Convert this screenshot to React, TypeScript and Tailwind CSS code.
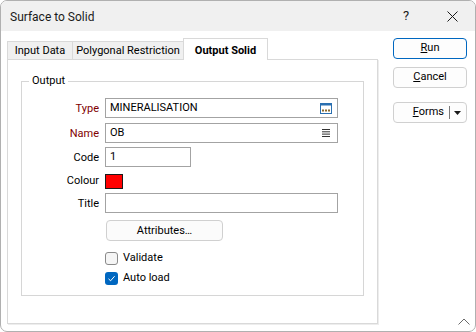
import React from "react";

function Checkbox({ checked }: { checked?: boolean }) {
  if (checked) {
    return (
      <div className="w-[13px] h-[13px] rounded-[3px] bg-[#0067c0] flex items-center justify-center">
        <svg width="9" height="9" viewBox="0 0 9 9">
          <polyline points="1.5,4.8 3.6,6.8 7.6,2.2" fill="none" stroke="#ffffff" strokeWidth="1" />
        </svg>
      </div>
    );
  }
  return <div className="w-[13px] h-[13px] rounded-[3px] border border-[#8a8a8a] bg-[#f5f5f5]" />;
}

export default function App() {
  return (
    <div className="w-[476px] h-[332px] relative flex flex-col bg-white border border-[#b0b0b0] rounded-[7px] overflow-hidden text-[11px] text-black font-['Roboto','Noto_Sans',sans-serif]">
      {/* Title bar */}
      <div className="h-[30px] shrink-0 bg-[#f0f0f0] flex items-center pl-[9px]">
        <span className="text-[12px] text-[#1a1a1a] pt-px">Surface to Solid</span>
        <div className="ml-auto flex h-full">
          <div className="w-[46px] flex items-center justify-center text-[13px] text-[#1a1a1a]">?</div>
          <div className="w-[46px] flex items-center justify-center">
            <svg width="11" height="11" viewBox="0 0 11 11">
              <line x1="0.5" y1="0.5" x2="10.5" y2="10.5" stroke="#1a1a1a" strokeWidth="1" />
              <line x1="10.5" y1="0.5" x2="0.5" y2="10.5" stroke="#1a1a1a" strokeWidth="1" />
            </svg>
          </div>
        </div>
      </div>

      {/* Body */}
      <div className="flex flex-1">
        {/* Left: tabs + panel */}
        <div className="pl-[6px] pt-[7px] flex flex-col">
          <div className="flex items-end h-[21px] relative z-10">
            <div className="w-[66px] h-[18px] border border-b-0 border-[#d9d9d9] bg-[#f0f0f0] flex items-center justify-center pt-[2px]">
              Input Data
            </div>
            <div className="-ml-px w-[112px] h-[18px] border border-b-0 border-[#d9d9d9] bg-[#f0f0f0] flex items-center justify-center pt-[2px]">
              Polygonal Restriction
            </div>
            <div className="-ml-px w-[85px] h-[22px] -mb-px border border-b-0 border-[#d9d9d9] bg-white flex items-start justify-center pt-[4px] font-bold relative z-10">
              Output Solid
            </div>
          </div>
          <div className="w-[371px] h-[265px] border border-[#d9d9d9] bg-white pt-[21px] px-[13px] shadow-[1px_1px_0_0_#ededed]">
            {/* Group box */}
            <div className="relative h-[215px] border border-[#d6d6d6] pt-[16px]">
              <span className="absolute -top-[8px] left-[7px] bg-white px-[3px] leading-[14px]">Output</span>

              {/* Type */}
              <div className="flex items-center h-[20px]">
                <div className="w-[77px] text-right text-[#800000] pt-[2px]">Type</div>
                <div className="ml-[6px] w-[233px] h-[20px] border border-[#a3a3a3] bg-white flex items-center pl-[4px] pr-[5px]">
                  <span className="pt-px">MINERALISATION</span>
                  <svg className="ml-auto" width="12" height="11" viewBox="0 0 12 11">
                    <rect x="0.5" y="0.5" width="11" height="10" fill="#ffffff" stroke="#2a6fb0" />
                    <rect x="0" y="0" width="12" height="2.5" fill="#2a6fb0" />
                    <rect x="2" y="6.5" width="2" height="2" fill="#8a6a2e" />
                    <rect x="5" y="6.5" width="2" height="2" fill="#8a6a2e" />
                    <rect x="8" y="6.5" width="2" height="2" fill="#8a6a2e" />
                  </svg>
                </div>
              </div>

              {/* Name */}
              <div className="flex items-center h-[20px] mt-[5px]">
                <div className="w-[77px] text-right text-[#800000] pt-[2px]">Name</div>
                <div className="ml-[6px] w-[233px] h-[20px] border border-[#a3a3a3] bg-white flex items-center pl-[4px] pr-[7px]">
                  <span className="pt-px">OB</span>
                  <svg className="ml-auto" width="8" height="8" viewBox="0 0 8 8">
                    <rect x="0" y="0" width="8" height="1" fill="#333333" />
                    <rect x="0" y="2.3" width="8" height="1" fill="#333333" />
                    <rect x="0" y="4.6" width="8" height="1" fill="#333333" />
                    <rect x="0" y="7" width="8" height="1" fill="#333333" />
                  </svg>
                </div>
              </div>

              {/* Code */}
              <div className="flex items-center h-[20px] mt-[4px]">
                <div className="w-[77px] text-right pt-[2px]">Code</div>
                <div className="ml-[6px] w-[86px] h-[20px] border border-[#a3a3a3] bg-white flex items-center pl-[4px]">
                  <span className="pt-px">1</span>
                </div>
              </div>

              {/* Colour */}
              <div className="flex items-center h-[21px] mt-[4px]">
                <div className="w-[77px] text-right">Colour</div>
                <div className="ml-[6px] w-[18px] h-[15px] border border-[#1a1a1a] bg-[#ff0000]" />
              </div>

              {/* Title */}
              <div className="flex items-center h-[20px] mt-[1px]">
                <div className="w-[77px] text-right pt-[2px]">Title</div>
                <div className="ml-[6px] w-[233px] h-[20px] border border-[#a3a3a3] bg-white" />
              </div>

              {/* Attributes */}
              <div className="flex mt-[7px]">
                <div className="ml-[84px] w-[117px] h-[21px] rounded-[4px] border border-[#d0d0d0] bg-[#fbfbfb] flex items-center justify-center pt-px">
                  Attributes…
                </div>
              </div>

              {/* Validate */}
              <div className="flex items-center h-[20px] mt-[7px] pl-[83px]">
                <Checkbox />
                <span className="ml-[5px] pt-px">Validate</span>
              </div>
              {/* Auto load */}
              <div className="flex items-center h-[20px] pl-[83px]">
                <Checkbox checked />
                <span className="ml-[5px] pt-px">Auto load</span>
              </div>
            </div>
          </div>
        </div>

        {/* Right: buttons */}
        <div className="ml-[15px] pt-[7px] flex flex-col">
          <div className="w-[74px] h-[21px] rounded-[4px] border border-[#0067c0] bg-[#fdfdfd] flex items-center justify-center">
            <span>
              <span className="underline">R</span>un
            </span>
          </div>
          <div className="mt-[8px] w-[74px] h-[21px] rounded-[4px] border border-[#d0d0d0] bg-[#fdfdfd] flex items-center justify-center">
            <span>
              <span className="underline">C</span>ancel
            </span>
          </div>
          <div className="mt-[14px] w-[74px] h-[21px] rounded-[4px] border border-[#d0d0d0] bg-[#fdfdfd] flex items-center justify-end pr-[5px]">
            <span>
              <span className="underline">F</span>orms
            </span>
            <span className="ml-[5px] w-px h-[13px] bg-[#7a7a7a]" />
            <svg className="ml-[4px]" width="7" height="4" viewBox="0 0 7 4">
              <polygon points="0,0 7,0 3.5,4" fill="#1a1a1a" />
            </svg>
          </div>
        </div>
      </div>

      {/* Size grip */}
      <svg className="absolute right-[5px] bottom-[6px]" width="12" height="7" viewBox="0 0 12 7">
        <polyline points="0.5,6.5 6,1 11.5,6.5" fill="none" stroke="#6a6a6a" strokeWidth="1" />
      </svg>
    </div>
  );
}
